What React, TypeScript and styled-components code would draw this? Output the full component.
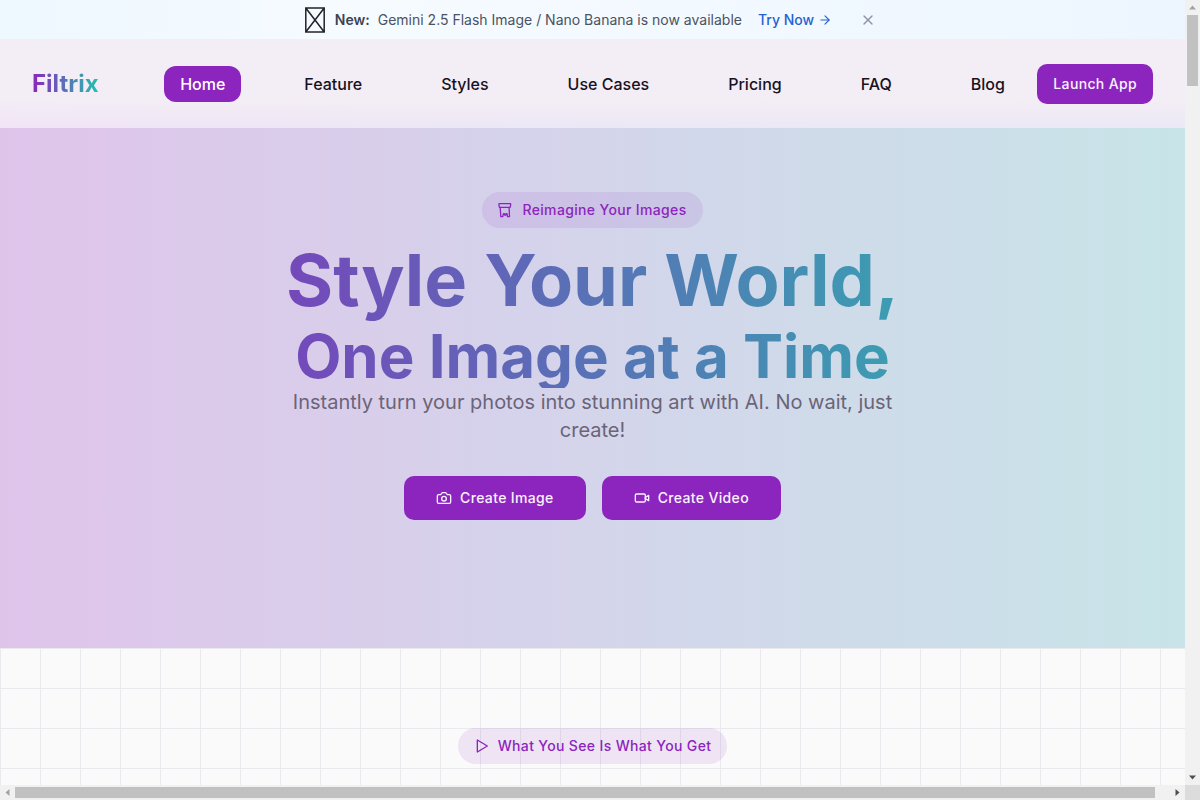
import React from "react";
import styled, { createGlobalStyle, css } from "styled-components";
import { ArrowRight, X } from "lucide-react";

const purple = "#8c25be";
const teal = "#24c0ae";

const GlobalStyle = createGlobalStyle`
  *, *::before, *::after { box-sizing: border-box; }
  body {
    margin: 0;
    font-family: Inter, "Liberation Sans", sans-serif;
    font-size: 16px;
    line-height: 24px;
    color: #18121e;
    overflow: hidden;
  }
  a { color: inherit; text-decoration: none; }
  button { font: inherit; cursor: pointer; }
  h1, p { margin: 0; }
`;

const Frame = styled.div`
  display: grid;
  grid-template-columns: minmax(0, 1fr) 15px;
  grid-template-rows: minmax(0, 1fr) 15px;
  height: 100vh;
`;

const Page = styled.div`
  overflow: hidden;
  background: #fafafa;
`;

const Banner = styled.aside`
  display: flex;
  justify-content: center;
  align-items: center;
  height: 39px;
  font-size: 14px;
  line-height: 20px;
  color: #4a5362;
  background: linear-gradient(to right, #eef8ff, #f6fbff 30%, #edf6ff);
`;

const Tofu = styled.svg`
  margin-right: 10px;
`;

const BannerLabel = styled.strong`
  font-weight: 600;
  color: #3b4453;
  margin-right: 8px;
`;

const BannerLink = styled.a`
  display: flex;
  align-items: center;
  gap: 4px;
  margin-left: 16px;
  font-weight: 500;
  color: #2563cf;
`;

const Dismiss = styled.button`
  display: flex;
  margin-left: 24px;
  padding: 4px;
  border: 0;
  background: none;
  color: #8d94a3;
`;

const Header = styled.header`
  display: grid;
  grid-template-columns: 1fr auto 1fr;
  align-items: center;
  height: 89px;
  padding: 0 32px;
  background:
    linear-gradient(to bottom, #f3edf5 70%, rgba(243, 237, 245, 0)),
    linear-gradient(to right, #f1e4f6, #ebe8f5 50%, #ebe9f5);
`;

const gradientText = css`
  color: transparent;
  background-image: linear-gradient(to right, ${purple}, ${teal});
  -webkit-background-clip: text;
  background-clip: text;
`;

const Logo = styled.a`
  ${gradientText}
  justify-self: start;
  font-size: 24px;
  line-height: 32px;
  font-weight: 700;
`;

const Nav = styled.nav`
  display: flex;
  gap: 47px;
`;

const NavLink = styled.a<{ $active?: boolean }>`
  padding: 6px 16px;
  border-radius: 12px;
  font-weight: 500;
  white-space: nowrap;
  ${({ $active }) => $active && css`color: #fff; background: ${purple};`}
`;

const Button = styled.button<{ $large?: boolean }>`
  display: inline-flex;
  align-items: center;
  justify-content: center;
  gap: 8px;
  justify-self: end;
  height: ${({ $large }) => ($large ? 44 : 40)}px;
  padding: 0 ${({ $large }) => ($large ? 32 : 16)}px;
  border: 0;
  border-radius: 10px;
  background: ${purple};
  color: #fbf1ff;
  font-size: 14px;
  font-weight: 500;
  letter-spacing: 0.025em;
  white-space: nowrap;
`;

const Hero = styled.section`
  display: flex;
  flex-direction: column;
  align-items: center;
  padding: 64px 32px 128px;
  text-align: center;
  background: linear-gradient(to right, #dfc4ea, #d5d3eb 45%, #c8e4e8);
`;

const Badge = styled.div`
  display: inline-flex;
  align-items: center;
  gap: 8px;
  padding: 8px 16px;
  border-radius: 18px;
  font-size: 14px;
  line-height: 20px;
  font-weight: 500;
  letter-spacing: 0.025em;
  color: ${purple};
  background: rgba(139, 35, 191, 0.1);
`;

const Title = styled.h1`
  ${gradientText}
  width: 100%;
  margin-top: 16px;
  font-size: 72px;
  line-height: 72px;
  font-weight: 700;
`;

const Subtitle = styled.span`
  font-size: 60px;
  line-height: 60px;
`;

const Lead = styled.p`
  max-width: 640px;
  font-size: 20px;
  line-height: 28px;
  color: #6b6478;
`;

const Actions = styled.div`
  display: flex;
  gap: 16px;
  margin-top: 32px;
`;

const Showcase = styled.section`
  display: flex;
  justify-content: center;
  align-items: flex-start;
  min-height: 480px;
  padding: 80px 32px;
  background-color: #fafafa;
  background-image:
    linear-gradient(to right, #e9e9ee 1px, transparent 1px),
    linear-gradient(to bottom, #e9e9ee 1px, transparent 1px);
  background-size: 40px 40px;
`;

const Track = styled.div<{ $vertical?: boolean }>`
  display: flex;
  flex-direction: ${({ $vertical }) => ($vertical ? "column" : "row")};
  background: #f1f1f1;
`;

const Arrow = styled.svg`
  flex: none;
  display: block;
`;

const Thumb = styled.div<{ $vertical?: boolean }>`
  background: #c1c1c1;
  ${({ $vertical }) =>
    $vertical
      ? css`height: 9%; margin: 0 2px;`
      : css`flex: 1; margin: 2px 15px 2px 0;`}
`;

const Spacer = styled.div`
  flex: 1;
`;

const Corner = styled.div`
  background: #dcdcdc;
`;

function BrushIcon() {
  return (
    <svg width="16" height="16" viewBox="0 0 16 16" fill="none" stroke="currentColor" strokeWidth="1.3" strokeLinejoin="round" aria-hidden="true">
      <path d="M1 1.6h11.6v2.2L12 5.4H1.6L1 3.8z" />
      <path d="M2.2 5.4l.6 9.2h2l.6-3h1l.3 1.6h1l.3-1.6h1l.5 3h2l-.4-9.2" />
    </svg>
  );
}

const Glyph = styled.svg.attrs({
  width: 16,
  height: 16,
  viewBox: "0 0 24 24",
  fill: "none",
  stroke: "currentColor",
  strokeWidth: 2,
  strokeLinecap: "round",
  strokeLinejoin: "round",
  "aria-hidden": true,
})`
  flex: none;
`;

const links = ["Home", "Feature", "Styles", "Use Cases", "Pricing", "FAQ", "Blog"];

export default function App() {
  return (
    <>
      <GlobalStyle />
      <Frame>
        <Page>
          <Banner>
            <Tofu width="20" height="26" viewBox="0 0 20 26" fill="none" stroke="#20242a" aria-hidden="true">
              <path d="M.8 1h18.4v24H.8zM.8 1l18.4 24M19.2 1L.8 25" strokeWidth="1.5" />
            </Tofu>
            <BannerLabel>New:</BannerLabel>
            <span>Gemini 2.5 Flash Image / Nano Banana is now available</span>
            <BannerLink href="#try">
              Try Now <ArrowRight size={14} />
            </BannerLink>
            <Dismiss type="button" aria-label="Dismiss">
              <X size={16} />
            </Dismiss>
          </Banner>
          <Header>
            <Logo href="#home">Filtrix</Logo>
            <Nav>
              {links.map((label, i) => (
                <NavLink key={label} href="#" $active={i === 0}>
                  {label}
                </NavLink>
              ))}
            </Nav>
            <Button type="button">Launch App</Button>
          </Header>
          <main>
            <Hero>
              <Badge>
                <BrushIcon />
                Reimagine Your Images
              </Badge>
              <Title>
                Style Your World,
                <br />
                <Subtitle>One Image at a Time</Subtitle>
              </Title>
              <Lead>
                Instantly turn your photos into stunning art with AI. No wait, just create!
              </Lead>
              <Actions>
                <Button type="button" $large>
                  <Glyph>
                    <path d="M14.5 4h-5L7 7H4a2 2 0 0 0-2 2v9a2 2 0 0 0 2 2h16a2 2 0 0 0 2-2V9a2 2 0 0 0-2-2h-3z" />
                    <circle cx="12" cy="13" r="3.5" />
                  </Glyph>
                  Create Image
                </Button>
                <Button type="button" $large>
                  <Glyph>
                    <rect x="2" y="6" width="15" height="12" rx="2" />
                    <path d="M17 11l5-3v8l-5-3z" />
                  </Glyph>
                  Create Video
                </Button>
              </Actions>
            </Hero>
            <Showcase>
              <Badge>
                <Glyph>
                  <path d="M5 3l15 9-15 9z" />
                </Glyph>
                What You See Is What You Get
              </Badge>
            </Showcase>
          </main>
        </Page>
        <Track $vertical aria-hidden="true">
          <Arrow width="15" height="15" viewBox="0 0 15 15">
            <path d="M4 9.5h7L7.5 5.5z" fill="#a3a3a3" />
          </Arrow>
          <Thumb $vertical />
          <Spacer />
          <Arrow width="15" height="15" viewBox="0 0 15 15">
            <path d="M4 5.5h7L7.5 9.5z" fill="#505050" />
          </Arrow>
        </Track>
        <Track aria-hidden="true">
          <Arrow width="15" height="15" viewBox="0 0 15 15">
            <path d="M9.5 4v7L5.5 7.5z" fill="#a3a3a3" />
          </Arrow>
          <Thumb />
          <Arrow width="15" height="15" viewBox="0 0 15 15">
            <path d="M5.5 4v7L9.5 7.5z" fill="#505050" />
          </Arrow>
        </Track>
        <Corner aria-hidden="true" />
      </Frame>
    </>
  );
}
